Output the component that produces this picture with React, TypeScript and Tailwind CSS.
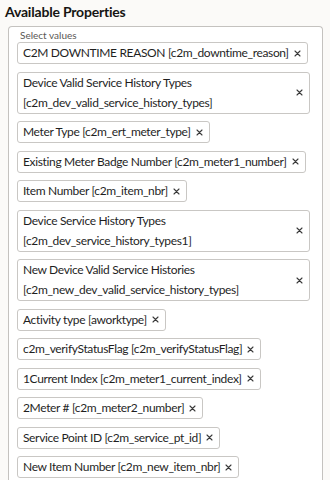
import React from 'react';

const values = [
  'C2M DOWNTIME REASON [c2m_downtime_reason]',
  'Device Valid Service History Types [c2m_dev_valid_service_history_types]',
  'Meter Type [c2m_ert_meter_type]',
  'Existing Meter Badge Number [c2m_meter1_number]',
  'Item Number [c2m_item_nbr]',
  'Device Service History Types [c2m_dev_service_history_types1]',
  'New Device Valid Service Histories [c2m_new_dev_valid_service_history_types]',
  'Activity type [aworktype]',
  'c2m_verifyStatusFlag [c2m_verifyStatusFlag]',
  '1Current Index [c2m_meter1_current_index]',
  '2Meter # [c2m_meter2_number]',
  'Service Point ID [c2m_service_pt_id]',
  'New Item Number [c2m_new_item_nbr]',
];

function CloseIcon() {
  return (
    <svg width="7" height="7" viewBox="0 0 7 7" className="shrink-0 text-[#3a3a3a]">
      <path d="M1 1 L6 6 M6 1 L1 6" stroke="currentColor" strokeWidth="1.1" strokeLinecap="round" />
    </svg>
  );
}

function Chip({ label }: { label: string }) {
  return (
    <div className="flex max-w-[293px] items-center gap-[5px] rounded-[3px] border border-[#c9c7c4] bg-white pl-[5px] pr-[6px]">
      <span className="text-[12px] leading-[20px] tracking-[-0.35px] text-[#1f1f1f]">{label}</span>
      <CloseIcon />
    </div>
  );
}

export default function App() {
  return (
    <div
      className="h-[480px] w-[330px] overflow-hidden bg-[#fbfaf8]"
      style={{ fontFamily: 'Lato, "Noto Sans", sans-serif' }}
    >
      <h1 className="px-[5px] pt-[2px] text-[14px] font-bold leading-[20px] tracking-[-0.2px] text-[#161513]">
        Available Properties
      </h1>
      <div className="ml-[8px] mt-[4px] w-[315px] rounded-t-[4px] border-x border-t border-[#c4c2bf] bg-white pb-4 pl-[8px] pr-[12px] pt-[3px]">
        <div className="pl-[3px] text-[10px] leading-[10px] text-[#5a5855]">Select values</div>
        <div className="mt-[2px] flex flex-col items-start gap-[7.5px]">
          {values.map((v) => (
            <Chip key={v} label={v} />
          ))}
        </div>
      </div>
    </div>
  );
}
